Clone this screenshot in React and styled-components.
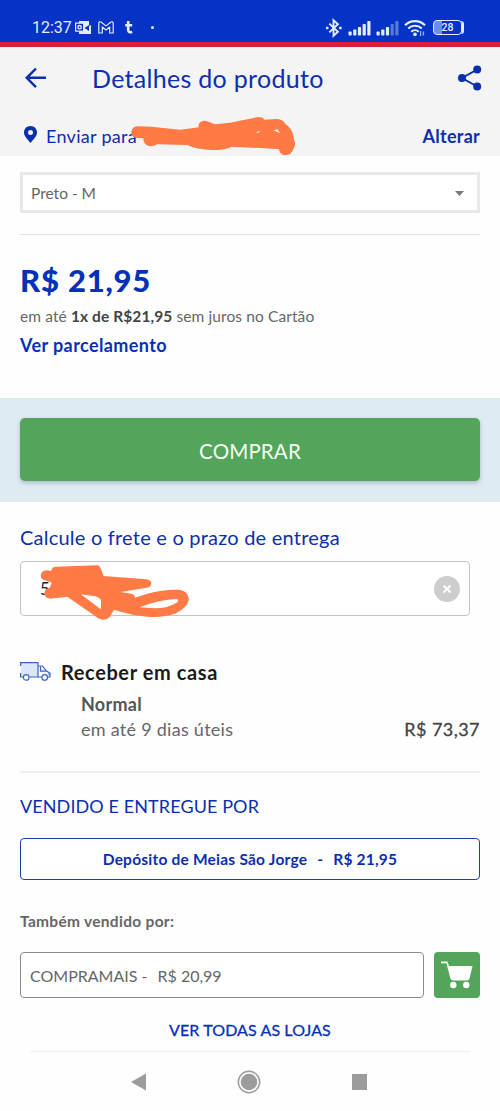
import styled, { createGlobalStyle } from "styled-components";

const BLUE = "#0a2fae";
const GREEN = "#52a55a";

const StatusIcons = () => (
  <Icons>
    <svg width="18" height="20" viewBox="0 0 18 20" fill="none" stroke="#e4ecff" strokeWidth="1.9">
      <path d="M4.3 5.6l8.6 8.2-4.4 4V2.2l4.4 4-8.6 8.2" />
      <path d="M1 10h2.4M14.2 10h2.4" strokeWidth="2.4" />
    </svg>
    <Signal bars={5} />
    <Signal bars={3} />
    <svg width="22" height="18" viewBox="0 0 22 18" fill="none" stroke="#e4ecff" strokeWidth="2.1">
      <path d="M1 6.2a14.2 14.2 0 0 1 20 0M4.2 9.6a9.7 9.7 0 0 1 13.6 0M7.3 12.8a5.3 5.3 0 0 1 7.4 0" />
      <circle cx="11" cy="15.4" r="1.8" fill="#e4ecff" stroke="none" />
      <path d="M16.6 12v5M19.4 12.5v4" stroke="#8fa9ee" strokeWidth="1.4" />
    </svg>
    <Battery>
      <span>28</span>
    </Battery>
  </Icons>
);

const Signal = ({ bars }) => (
  <svg width="23" height="16" viewBox="0 0 23 16" fill="#e4ecff">
    {[4, 6, 8.5, 11.5, 14.5].map((h, i) => (
      <rect key={h} x={0.5 + i * 4.7} y={15.5 - h} width="3.2" height={h} rx="0.8" opacity={i < bars ? 1 : 0.38} />
    ))}
  </svg>
);

const App = () => {
  return (
    <>
      <GlobalStyle />
      <Page>
        <StatusBar>
          <Clock>12:37</Clock>
          <Notifications>
            <svg width="16" height="13" viewBox="0 0 16 13" fill="none" stroke="#e4ecff">
              <path d="M4 0h10v5l2-1v9H4z" fill="#e4ecff" stroke="none" />
              <path d="M.6 2.2h8v8h-8z" fill="#0433c6" strokeWidth="1.2" />
              <circle cx="4.6" cy="6.2" r="1.7" strokeWidth="1.4" />
              <path d="M9.5 7l4.5-3v6z" fill="#0433c6" stroke="none" />
            </svg>
            <svg width="16" height="13" viewBox="0 0 16 13" fill="none" stroke="#e4ecff" strokeWidth="1.2" strokeLinejoin="round">
              <path d="M.8 12V2.3C.8.7 2.3.4 3.3 1.2L8 4.9l4.7-3.7c1-.8 2.5-.5 2.5 1.1V12h-3.500V6L8 9 4.300 6v6z" />
            </svg>
            <svg width="8" height="13" viewBox="0 0 8 13" fill="none" stroke="#e4ecff" strokeWidth="2.6">
              <path d="M3.2 0v9c0 2.3 1.7 2.5 4 1.9M.2 4.3h7" />
            </svg>
            <Dot />
          </Notifications>
          <StatusIcons />
        </StatusBar>

        <Header>
          <TitleRow>
            <svg width="22" height="22" viewBox="0 0 22 22" fill="none" stroke={BLUE} strokeWidth="2.4">
              <path d="M21 10.8H2M11 1.5L1.7 10.8l9.3 9.3" />
            </svg>
            <Title>Detalhes do produto</Title>
            <svg width="24" height="26" viewBox="0 0 24 26" fill={BLUE}>
              <path d="M19.2 4.5L4 13l15.2 8.5" fill="none" stroke={BLUE} strokeWidth="2" />
              <circle cx="19.2" cy="4.5" r="4" />
              <circle cx="4" cy="13" r="4" />
              <circle cx="19.2" cy="21.5" r="4" />
            </svg>
          </TitleRow>
          <LocationRow>
            <svg width="13" height="17" viewBox="0 0 13 17" fill={BLUE}>
              <path fillRule="evenodd" d="M6.500 0C2.800 0 0 2.800 0 6.400 0 10.500 4.500 14 6.500 17 8.500 14 13 10.500 13 6.400 13 2.800 10.200 0 6.500 0zm0 3.900a2.500 2.500 0 1 1 0 5 2.500 2.500 0 0 1 0-5z" />
            </svg>
            <SendTo>Enviar para</SendTo>
            <Change>Alterar</Change>
            <AddressScribble viewBox="390 30 510 135">
              <path
                fillRule="evenodd"
                d="M394 84Q396 67 414 67L455 68 540 77 597 70Q591 54 612 50 624 51 645 61L690 56 770 40Q788 37 794 47L828 45Q848 45 857 60 880 77 882 107 889 122 881 133 875 155 852 154 838 148 837 136L794 133 695 128Q678 138 636 138 590 137 562 123L472 121Q462 128 445 126 430 121 430 103L410 102Q394 99 394 84zM768 85l14-5-8 7zM820 79l12-3 9 12z"
              />
            </AddressScribble>
          </LocationRow>
        </Header>

        <Content>
          <Select>
            Preto - M
            <svg width="9" height="5" viewBox="0 0 9 5" fill="#77797b">
              <path d="M0 0h9L4.5 5z" />
            </svg>
          </Select>
          <Divider />
          <Price>R$ 21,95</Price>
          <Installments>
            em até <b>1x de R$21,95</b> sem juros no Cartão
          </Installments>
          <InstallmentsLink>Ver parcelamento</InstallmentsLink>
        </Content>

        <BuyArea>
          <BuyButton>COMPRAR</BuyButton>
        </BuyArea>

        <Content>
          <FreightTitle>Calcule o frete e o prazo de entrega</FreightTitle>
          <ZipField>
            5
            <Clear>
              <svg width="10" height="10" viewBox="0 0 10 10" stroke="#fff" strokeWidth="2">
                <path d="M1.500 1.500l7 7M8.500 1.500l-7 7" />
              </svg>
            </Clear>
            <ZipScribble viewBox="120 490 450 175">
              <path
                fillRule="evenodd"
                d="M122 528Q123 513 140 512L153 514Q156 501 169 501L294 497Q301 500 304 511L311 529 439 539Q454 541 454 552 453 563 440 564L362 577 393 582Q405 584 405 594L442 582Q490 569 534 570 565 572 567 599 564 622 528 641 492 654 450 652 397 648 342 630L330 651Q321 661 307 660 293 657 284 648L202 591 150 597Q133 595 133 580 133 568 149 564L155 549Q139 543 133 542 123 538 122 528zM242 584L286 590Q303 596 303 604L303 629zM419 623Q470 602 526 598 542 599 530 609 499 627 463 626z"
              />
            </ZipScribble>
          </ZipField>

          <Delivery>
            <svg width="31" height="19" viewBox="0 0 31 19" fill="none" stroke="#3c62c4" strokeWidth="1.2">
              <path d="M1 1h17v14H1z" fill="#dbe6f8" stroke="none" />
              <path d="M.6 4V.6H18V15H9.5M3 15H.6v-4" />
              <path d="M18 4h4.5l4 5 3.5 2v4h-2.500M18 15h3.500" fill="#eef3fc" />
              <path d="M20.5 4.5v4.700h6M28 12h2" />
              <circle cx="6.2" cy="15.4" r="2.8" fill="#fff" />
              <circle cx="24.7" cy="15.4" r="2.8" fill="#fff" />
            </svg>
            <DeliveryTitle>Receber em casa</DeliveryTitle>
          </Delivery>
          <DeliveryOption>
            <Mode>Normal</Mode>
            <Row>
              <Deadline>em até 9 dias úteis</Deadline>
              <DeliveryPrice>R$ 73,37</DeliveryPrice>
            </Row>
          </DeliveryOption>
          <Divider $thick />

          <SoldBy>VENDIDO E ENTREGUE POR</SoldBy>
          <MainSeller>
            <span>Depósito de Meias São Jorge</span>
            <span>-</span>
            <span>R$ 21,95</span>
          </MainSeller>
          <AlsoSold>Também vendido por:</AlsoSold>
          <SellerRow>
            <Seller>
              <span>COMPRAMAIS -</span>
              <span>R$ 20,99</span>
            </Seller>
            <CartButton>
              <svg width="32" height="28" viewBox="0 0 32 28" fill="#fff">
                <path d="M0 .5h6.500L8 5h23.500l-3 12.500q-.5 2-2.500 2H12q-2 0-2.600-2L5.400 2.300H0z" />
                <circle cx="12.3" cy="24" r="3.2" />
                <circle cx="25.3" cy="24" r="3.2" />
              </svg>
            </CartButton>
          </SellerRow>
          <AllStores>VER TODAS AS LOJAS</AllStores>
        </Content>

        <NavBar>
          <svg width="15" height="18" viewBox="0 0 15 18" fill="#9c9c9c">
            <path d="M15 .5v17L0 9z" />
          </svg>
          <svg width="24" height="24" viewBox="0 0 24 24" fill="#9c9c9c">
            <circle cx="12" cy="12" r="10.7" fill="none" stroke="#9c9c9c" strokeWidth="1.5" />
            <circle cx="12" cy="12" r="8.3" />
          </svg>
          <svg width="15" height="16" viewBox="0 0 15 16" fill="#9c9c9c">
            <rect width="15" height="16" />
          </svg>
        </NavBar>
      </Page>
    </>
  );
};

export default App;

const GlobalStyle = createGlobalStyle`
  * {
    box-sizing: border-box;
  }
  body {
    margin: 0;
    background: #fefefe;
    font-family: Lato, "Open Sans", sans-serif;
  }
  svg {
    display: block;
    flex-shrink: 0;
  }
`;

const Page = styled.main`
  display: flex;
  flex-direction: column;
  width: 500px;
  height: 1111px;
  overflow: hidden;
  > * {
    flex-shrink: 0;
  }
`;

const StatusBar = styled.div`
  display: flex;
  align-items: center;
  height: 47px;
  padding: 13px 38px 0 32px;
  background: #0433c6;
  border-bottom: 5px solid #e31b3c;
  color: #e4ecff;
  font-family: Roboto, sans-serif;
`;

const Clock = styled.span`
  width: 43px;
  padding-top: 1px;
  font-size: 16px;
  line-height: 20px;
`;

const Notifications = styled.div`
  display: flex;
  align-items: center;
  gap: 7px;
  svg:nth-child(3) {
    margin-left: 4px;
  }
`;

const Dot = styled.i`
  width: 3px;
  height: 3px;
  margin-left: 11px;
  border-radius: 50%;
  background: #e4ecff;
`;

const Icons = styled.div`
  display: flex;
  align-items: center;
  gap: 5px;
  margin-left: auto;
`;

const Battery = styled.div`
  display: flex;
  align-items: center;
  justify-content: center;
  width: 29px;
  height: 15px;
  margin-left: 2px;
  border: 1.5px solid #e4ecff;
  border-radius: 4px;
  background: linear-gradient(90deg, #6f8fe6 30%, #0433c6 30%);
  font-size: 10.5px;
  font-weight: 500;
  box-shadow: 3px 0 0 -1px #e4ecff;
`;

const Header = styled.header`
  height: 109px;
  background: #f4f4f4;
`;

const TitleRow = styled.div`
  display: flex;
  align-items: center;
  height: 62px;
  padding: 0 18px 0 25px;
`;

const Title = styled.h1`
  flex: 1;
  margin: 0 0 0 45px;
  color: ${BLUE};
  font-size: 25px;
  font-weight: 400;
  line-height: 32px;
  letter-spacing: 0.3px;
`;

const LocationRow = styled.div`
  position: relative;
  display: flex;
  align-items: center;
  height: 47px;
  padding: 0 20px 0 24px;
  svg:first-child {
    margin-top: 3px;
  }
`;

const SendTo = styled.span`
  margin: 7px 0 0 9px;
  color: ${BLUE};
  font-size: 18px;
  line-height: 24px;
  letter-spacing: 0.3px;
`;

const Change = styled.span`
  margin: 7px 0 0 auto;
  color: ${BLUE};
  font-size: 18px;
  font-weight: 700;
  line-height: 24px;
  letter-spacing: 0.25px;
`;

const AddressScribble = styled.svg`
  position: absolute;
  top: 5px;
  left: 130px;
  width: 170px;
  height: 45px;
  fill: #ff7a45;
`;

const Content = styled.section`
  display: flex;
  flex-direction: column;
  padding: 0 20px;
`;

const Select = styled.div`
  display: flex;
  align-items: center;
  justify-content: space-between;
  height: 41px;
  margin-top: 16px;
  padding: 1px 13px 0 8px;
  border: 3px solid #e8e8e8;
  background: #fff;
  color: #666;
  font-size: 15.5px;
`;

const Divider = styled.hr`
  width: 100%;
  height: ${({ $thick }) => ($thick ? "2px" : "1px")};
  margin: ${({ $thick }) => ($thick ? "29px 0 0" : "21px 0 0")};
  border: 0;
  background: ${({ $thick }) => ($thick ? "#efefef" : "#e2e2e2")};
`;

const Price = styled.strong`
  margin-top: 25px;
  color: #0531b9;
  font-size: 31px;
  font-weight: 900;
  line-height: 40px;
  letter-spacing: 0.8px;
`;

const Installments = styled.p`
  margin: 6px 0 0;
  color: #666;
  font-size: 15.5px;
  line-height: 20px;
  letter-spacing: 0.1px;
  b {
    color: #444;
    font-weight: 700;
  }
`;

const InstallmentsLink = styled.span`
  margin-top: 7px;
  color: #0531b9;
  font-size: 18px;
  font-weight: 700;
  line-height: 24px;
  letter-spacing: 0.4px;
`;

const BuyArea = styled.div`
  height: 104px;
  margin-top: 41px;
  padding: 20px;
  background: #dfebf3;
`;

const BuyButton = styled.button`
  display: block;
  width: 100%;
  height: 63px;
  padding: 2px 0 0;
  border: 0;
  border-radius: 5px;
  background: ${GREEN};
  box-shadow: 0 2px 4px rgba(60, 70, 100, 0.3);
  color: #f4fff2;
  font-family: inherit;
  font-size: 20.5px;
  letter-spacing: 0.15px;
`;

const FreightTitle = styled.h2`
  margin: 21px 0 0;
  color: ${BLUE};
  font-size: 20px;
  font-weight: 400;
  line-height: 28px;
  letter-spacing: 0.22px;
`;

const ZipField = styled.div`
  position: relative;
  display: flex;
  align-items: center;
  justify-content: space-between;
  width: 450px;
  height: 55px;
  margin-top: 10px;
  padding: 0 9px 0 19px;
  border: 1.5px solid #c4c4c4;
  border-radius: 4px;
  background: #fff;
  color: #222;
  font-size: 17px;
`;

const Clear = styled.span`
  display: grid;
  place-items: center;
  width: 26px;
  height: 26px;
  border-radius: 50%;
  background: #cdcdcd;
`;

const ZipScribble = styled.svg`
  position: absolute;
  top: 1px;
  left: 19px;
  width: 150px;
  height: 58.3px;
  fill: #ff7a45;
`;

const Delivery = styled.div`
  display: flex;
  align-items: center;
  gap: 10px;
  height: 28px;
  margin-top: 41px;
`;

const DeliveryTitle = styled.h3`
  margin: 1px 0 0;
  color: #1b1b1b;
  font-size: 20px;
  font-weight: 700;
  line-height: 28px;
  letter-spacing: 0.6px;
`;

const DeliveryOption = styled.div`
  padding-left: 61px;
  margin-top: 7px;
  color: #555;
  font-size: 18px;
  line-height: 25px;
  letter-spacing: 0.27px;
`;

const Mode = styled.div`
  font-weight: 700;
`;

const Row = styled.div`
  display: flex;
  justify-content: space-between;
`;

const Deadline = styled.span`
  color: #666;
`;

const DeliveryPrice = styled.span`
  color: #444;
  letter-spacing: 0.45px;
  -webkit-text-stroke: 0.3px #444;
`;

const SoldBy = styled.h2`
  margin: 21px 0 0;
  color: ${BLUE};
  font-size: 18px;
  font-weight: 400;
  line-height: 24px;
  letter-spacing: 0.1px;
`;

const MainSeller = styled.div`
  display: flex;
  align-items: center;
  justify-content: center;
  gap: 10px;
  height: 42px;
  margin-top: 20px;
  border: 1.5px solid #1c40a8;
  border-radius: 4px;
  background: #fff;
  color: ${BLUE};
  font-size: 15.5px;
  font-weight: 700;
  letter-spacing: 0.22px;
`;

const AlsoSold = styled.p`
  margin: 31px 0 0;
  color: #666;
  font-size: 15.5px;
  font-weight: 700;
  line-height: 20px;
  letter-spacing: 0.3px;
`;

const SellerRow = styled.div`
  display: flex;
  gap: 10px;
  margin-top: 21px;
`;

const Seller = styled.div`
  display: flex;
  flex: 1;
  align-items: center;
  gap: 10px;
  height: 46px;
  padding-left: 9px;
  border: 1.5px solid #8c8c8c;
  border-radius: 4px;
  background: #fff;
  color: #666;
  font-size: 16px;
`;

const CartButton = styled.div`
  display: grid;
  place-items: center;
  width: 46px;
  height: 46px;
  border-radius: 4px;
  background: ${GREEN};
`;

const AllStores = styled.span`
  height: 54px;
  margin: 0 10px;
  padding-top: 22px;
  border-bottom: 1px solid #efefef;
  color: #0531b9;
  font-size: 16px;
  line-height: 20px;
  letter-spacing: 0.1px;
  text-align: center;
  -webkit-text-stroke: 0.3px #0531b9;
`;

const NavBar = styled.nav`
  display: flex;
  align-items: center;
  justify-content: space-between;
  height: 59px;
  padding: 0 133px 0 131px;
`;
